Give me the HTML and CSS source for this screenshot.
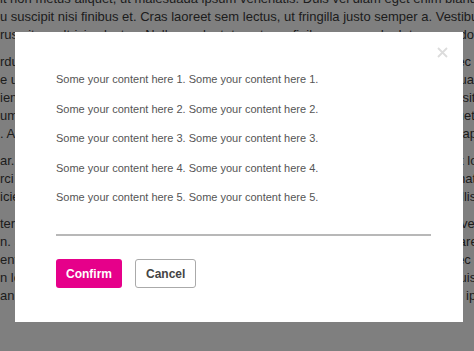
FILE: index.html
```html
<!DOCTYPE html>
<html lang="en">
    <head>
        <meta charset="UTF-8">
        <meta name="viewport" content="width=device-width, initial-scale=1.0">
        <title>Modal dialog</title>
        <link rel="stylesheet" href="styles.css">
    </head>
    <body>
        <div class="page">
            <p>
                <span class="ln">it non metus aliquet, ut malesuada ipsum venenatis. Duis vel diam eget enim blandit tincidunt quis.</span>
                <span class="ln">u suscipit nisi finibus et. Cras laoreet sem lectus, ut fringilla justo semper a. Vestibulum ante ipsum</span>
                <span class="ln">rus vitae, ultricies lectus. Nullam vulputate ante eu finibus commodo. Integer ac dolor quis nunc</span>
            </p>
            <p>
                <span class="ln">rdum nisl, vitae viverra metus. Suspendisse potenti. Sed blandit velit eu lorem nec feugiat</span>
                <span class="ln">e ut lacinia dolor. Pellentesque habitant morbi tristique senectus et netus et. Aliquam</span>
                <span class="ln">ien sed ornare lectus, non placerat enim. Morbi id purus massa. Nam quis lacus sit amet enim</span>
                <span class="ln">um odio, vel porta nunc tempus et. Proin finibus est sed massa mattis, eget aliquet mi</span>
                <span class="ln">. Aenean at magna in lorem euismod convallis. Suspendisse a tortor sed turpis dapibus quis</span>
            </p>
            <p>
                <span class="ln">ar. Curabitur tempor diam sit amet sapien rhoncus, non efficitur nulla maximus at lorem</span>
                <span class="ln">rci luctus et ultrices posuere cubilia curae; Maecenas sit amet tortor sed ipsum mattis</span>
                <span class="ln">icies. Etiam in ligula non est pellentesque tempus vel vitae nibh. Nulla facilisi mollis la</span>
            </p>
            <p>
                <span class="ln">ter sed feugiat. Morbi a libero sit amet dolor iaculis ultricies non sit amet lorem vive</span>
                <span class="ln">n. Sed et lorem id ex faucibus viverra. Integer sodales, lectus quis dignissim ornare, ra</span>
                <span class="ln">enti. Vivamus pharetra mi vel orci elementum, non tempor nibh ultricies ac. Donec eu ate</span>
                <span class="ln">n lorem. Aenean ullamcorper, magna at dignissim finibus, sem lacus imperdiet quis comm</span>
                <span class="ln">an eget aliquet mauris. Quisque luctus ante non enim volutpat hendrerit. Nulla ut ipsum</span>
            </p>
        </div>

        <div class="overlay">
            <div class="modal">
                <button class="close-btn" aria-label="Close">
                    <svg width="11" height="11" viewBox="0 0 11 11">
                        <path d="M1 1L10 10M10 1L1 10" stroke="#dcdcdc" stroke-width="1.8" fill="none"/>
                    </svg>
                </button>
                <div class="modal-body">
                    <p>Some your content here 1. Some your content here 1.</p>
                    <p>Some your content here 2. Some your content here 2.</p>
                    <p>Some your content here 3. Some your content here 3.</p>
                    <p>Some your content here 4. Some your content here 4.</p>
                    <p>Some your content here 5. Some your content here 5.</p>
                </div>
                <div class="modal-actions">
                    <button class="confirm-btn">Confirm</button>
                    <button class="cancel-btn">Cancel</button>
                </div>
            </div>
        </div>
    </body>
</html>
```

FILE: styles.css
```css
html, body {
    margin: 0;
    height: 100%;
    overflow: hidden;
}

body {
    font-family: 'Liberation Sans', Arial, sans-serif;
    background-color: #fff;
}

/* page text behind the dialog */
.page {
    margin-top: -10px;
    font-size: 13px;
    line-height: 18px;
    color: #3b3b3b;
}

.page p {
    margin: 0 0 9px;
}

.ln {
    display: block;
    white-space: nowrap;
    overflow: hidden;
}

/* dialog */
.overlay {
    position: fixed;
    top: 0;
    left: 0;
    right: 0;
    bottom: 0;
    background: rgba(0, 0, 0, 0.5);
    padding: 32px 0 0 15px;
}

.modal {
    position: relative;
    width: 448px;
    box-sizing: border-box;
    padding: 38px 32px 34px 41px;
    background: #fff;
}

.close-btn {
    position: absolute;
    top: 15px;
    right: 15px;
    padding: 0;
    border: none;
    background: none;
    line-height: 0;
    cursor: pointer;
}

.modal-body {
    padding-bottom: 16.5px;
    border-bottom: 2px solid #b8b8b8;
}

.modal-body p {
    margin: 0 0 11.5px;
    font-size: 11px;
    line-height: 18px;
    color: #555;
}

.modal-actions {
    display: flex;
    gap: 13px;
    margin-top: 23px;
}

.modal-actions button {
    height: 29px;
    padding: 0 10px;
    border-radius: 3px;
    font-family: inherit;
    font-size: 12px;
    font-weight: bold;
    cursor: pointer;
}

.confirm-btn {
    border: none;
    background-color: #e6008a;
    color: #fff;
}

.cancel-btn {
    border: 1px solid #aaa;
    background-color: #fff;
    color: #444;
}
```
